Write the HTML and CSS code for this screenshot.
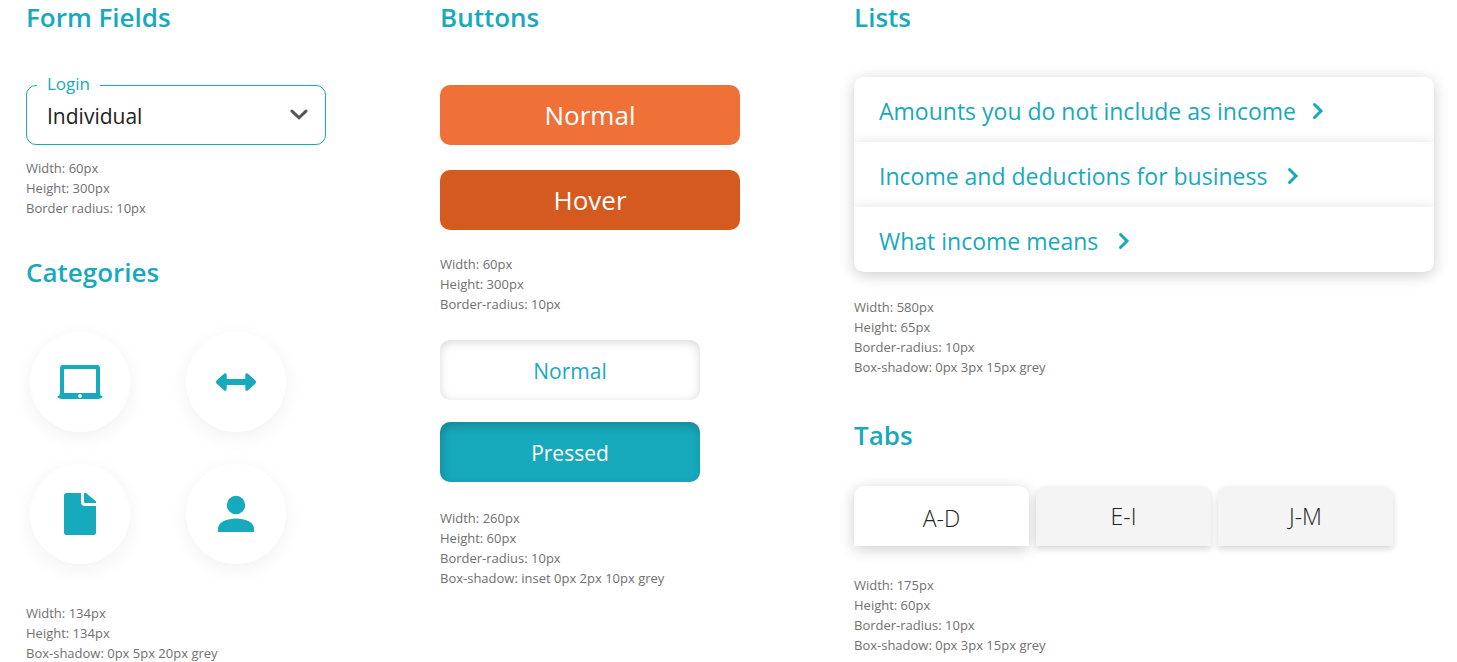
FILE: index.html
```html
<!DOCTYPE html>
<html lang="en">
<head>
<meta charset="utf-8">
<meta name="viewport" content="width=device-width, initial-scale=1">
<title>Component styles</title>
<link rel="stylesheet" href="styles.css">
</head>
<body>
<main class="guide">
  <div class="column">
    <section class="form-fields">
      <h2>Form Fields</h2>
      <div class="field">
        <label class="field-label" for="login">Login</label>
        <select class="field-select" id="login">
          <option>Individual</option>
          <option>Business</option>
        </select>
        <svg class="field-chevron" viewBox="0 0 18 12" aria-hidden="true"><path d="M2 2.200 9 8.800 16 2.200"/></svg>
      </div>
      <ul class="specs">
        <li>Width: 60px</li>
        <li>Height: 300px</li>
        <li>Border radius: 10px</li>
      </ul>
    </section>
    <section class="categories">
      <h2>Categories</h2>
      <div class="category-grid">
        <button class="category" type="button" aria-label="Devices">
          <svg viewBox="0 0 100 100" aria-hidden="true"><path fill-rule="evenodd" d="M33 33h34q3 0 3 3v26q0 1.800 2.800 2.400Q72 67 65 67H35q-7 0-7.800-2.600Q30 63.800 30 62V36q0-3 3-3Zm1 4v24h32V37ZM50 62a2 2 0 1 0 0 4 2 2 0 0 0 0-4Z"/></svg>
        </button>
        <button class="category" type="button" aria-label="Transfers">
          <svg viewBox="0 0 100 100" aria-hidden="true"><path d="M40.700 43v4h18.600v-4c0-1.800 1.500-2.300 2.700-1.200l7.500 6.800q1 1.400 0 2.800L62 58.200c-1.200 1.100-2.700.6-2.700-1.200v-4H40.700v4c0 1.800-1.500 2.300-2.700 1.200l-7.500-6.800q-1-1.400 0-2.800l7.500-6.800c1.200-1.100 2.700-.6 2.700 1.200Z"/></svg>
        </button>
        <button class="category" type="button" aria-label="Documents">
          <svg viewBox="0 0 100 100" aria-hidden="true"><path d="M36.500 29H51v9q0 4 4 4h11v26.500q0 2.500-2.500 2.500h-27Q34 71 34 68.500v-37q0-2.500 2.500-2.500Zm17.500 0h2l10 8.500V39H55.500Q54 39 54 37.500Z"/></svg>
        </button>
        <button class="category" type="button" aria-label="Profile">
          <svg viewBox="0 0 100 100" aria-hidden="true"><circle cx="50" cy="41" r="9.200"/><path d="M32 68v-3.500C32 58 41 54.500 50 54.500S68 58 68 64.500V68Z"/></svg>
        </button>
      </div>
      <ul class="specs">
        <li>Width: 134px</li>
        <li>Height: 134px</li>
        <li>Box-shadow: 0px 5px 20px grey</li>
      </ul>
    </section>
  </div>

  <section class="column buttons">
    <h2>Buttons</h2>
    <div class="primary-group">
      <button class="button primary" type="button">Normal</button>
      <button class="button primary hovered" type="button">Hover</button>
    </div>
    <ul class="specs">
      <li>Width: 60px</li>
      <li>Height: 300px</li>
      <li>Border-radius: 10px</li>
    </ul>
    <div class="toggle-group">
      <button class="button toggle" type="button" aria-pressed="false">Normal</button>
      <button class="button toggle pressed" type="button" aria-pressed="true">Pressed</button>
    </div>
    <ul class="specs">
      <li>Width: 260px</li>
      <li>Height: 60px</li>
      <li>Border-radius: 10px</li>
      <li>Box-shadow: inset 0px 2px 10px grey</li>
    </ul>
  </section>

  <div class="column">
    <section class="lists">
      <h2>Lists</h2>
      <ul class="link-list">
        <li><a class="tight" href="#amounts">Amounts you do not include as income <svg viewBox="0 0 12 18" aria-hidden="true"><path d="M2.500 2.500 9 9 2.500 15.500"/></svg></a></li>
        <li><a href="#deductions">Income and deductions for business <svg viewBox="0 0 12 18" aria-hidden="true"><path d="M2.500 2.500 9 9 2.500 15.500"/></svg></a></li>
        <li><a href="#meaning">What income means <svg viewBox="0 0 12 18" aria-hidden="true"><path d="M2.500 2.500 9 9 2.500 15.500"/></svg></a></li>
      </ul>
      <ul class="specs">
        <li>Width: 580px</li>
        <li>Height: 65px</li>
        <li>Border-radius: 10px</li>
        <li>Box-shadow: 0px 3px 15px grey</li>
      </ul>
    </section>
    <section class="tabs">
      <h2>Tabs</h2>
      <div class="tab-list" role="tablist">
        <button class="tab active" type="button" role="tab" aria-selected="true">A-D</button>
        <button class="tab" type="button" role="tab" aria-selected="false">E-I</button>
        <button class="tab" type="button" role="tab" aria-selected="false">J-M</button>
      </div>
      <ul class="specs">
        <li>Width: 175px</li>
        <li>Height: 60px</li>
        <li>Border-radius: 10px</li>
        <li>Box-shadow: 0px 3px 15px grey</li>
      </ul>
    </section>
  </div>
</main>
</body>
</html>
```
FILE: styles.css
```css
:root {
  --teal: #17a9bc;
  --ink: #222;
}

* { box-sizing: border-box; }

body {
  margin: 0;
  background: #fff;
  color: var(--ink);
  font-family: "Open Sans", sans-serif;
}

button, select { font: inherit; }
button { border: 0; cursor: pointer; }
ul { margin: 0; padding: 0; list-style: none; }

h2 {
  margin: 0;
  padding-bottom: 2px;
  color: var(--teal);
  font-size: 26px;
  font-weight: 600;
  line-height: 34px;
}

.guide {
  display: grid;
  grid-template-columns: 414fr 414fr 580fr;
  padding: 0 23px 0 26px;
}

.specs {
  color: #707070;
  font-size: 13px;
  line-height: 20px;
}

/* Form field */
.field {
  position: relative;
  width: 300px;
  max-width: 100%;
  margin: 49px 0 13px;
}
.field-label {
  position: absolute;
  top: -12px;
  left: 11px;
  padding: 0 10px;
  background: #fff;
  color: var(--teal);
  font-size: 17px;
  line-height: 22px;
}
.field-select {
  display: block;
  width: 100%;
  height: 60px;
  padding: 2px 48px 0 20px;
  appearance: none;
  border: 1px solid var(--teal);
  border-radius: 10px;
  background: #fff;
  color: var(--ink);
  font-size: 21px;
}
.field-chevron {
  position: absolute;
  top: 24px;
  right: 18px;
  width: 18px;
  height: 12px;
  fill: none;
  stroke: #555;
  stroke-width: 3;
  stroke-linecap: round;
  pointer-events: none;
}

/* Categories */
.categories { margin-top: 37px; }
.category-grid {
  display: grid;
  grid-template-columns: repeat(2, 100px);
  gap: 32px 56px;
  padding-left: 4px;
  margin: 41px 0 39px;
}
.category {
  height: 100px;
  padding: 0;
  border-radius: 50%;
  background: #fff;
  box-shadow: 0 5px 20px rgba(0, 0, 0, 0.06);
}
.category svg {
  display: block;
  width: 100%;
  fill: var(--teal);
}

/* Buttons */
.button {
  height: 60px;
  border-radius: 10px;
}
.primary-group, .toggle-group {
  display: grid;
  max-width: 100%;
}
.primary-group {
  width: 300px;
  gap: 25px;
  margin: 49px 0 24px;
}
.toggle-group {
  width: 260px;
  gap: 22px;
  margin: 26px 0;
}
.primary {
  background: #f07138;
  color: #fff;
  font-size: 26px;
}
.primary.hovered { background: #d55a20; }
.toggle {
  padding: 2px 0 0;
  background: #fff;
  box-shadow: inset 0 2px 10px rgba(0, 0, 0, 0.16);
  color: var(--teal);
  font-size: 21px;
}
.toggle.pressed {
  background: var(--teal);
  box-shadow: inset 2px 4px 10px rgba(0, 0, 0, 0.2);
  color: #fff;
}

/* Lists */
.link-list {
  margin: 41px 0 25px;
  border-radius: 10px;
  box-shadow: 0 3px 15px rgba(0, 0, 0, 0.2);
  overflow: hidden;
}
.link-list li {
  background: #fff;
  box-shadow: 0 3px 15px rgba(0, 0, 0, 0.16);
}
.link-list a {
  display: flex;
  align-items: center;
  gap: 20px;
  height: 65px;
  padding: 2px 25px 0;
  color: var(--teal);
  font-size: 23px;
  text-decoration: none;
}
.link-list a.tight { gap: 16px; }
.link-list svg {
  flex: none;
  width: 12px;
  height: 18px;
  fill: none;
  stroke: var(--teal);
  stroke-width: 3;
  stroke-linecap: round;
}

/* Tabs */
.tabs { margin-top: 41px; }
.tab-list {
  display: flex;
  gap: 7px;
  margin: 32px 0 29px;
}
.tab {
  flex: 0 1 175px;
  height: 60px;
  padding: 0;
  border-radius: 10px 10px 0 0;
  background: #f4f4f4;
  box-shadow: 0 3px 6px rgba(0, 0, 0, 0.16);
  color: var(--ink);
  font-size: 23px;
  font-weight: 300;
}
.tab.active {
  padding: 4px 0 0;
  background: #fff;
  box-shadow: 0 3px 15px rgba(0, 0, 0, 0.2);
}
```
